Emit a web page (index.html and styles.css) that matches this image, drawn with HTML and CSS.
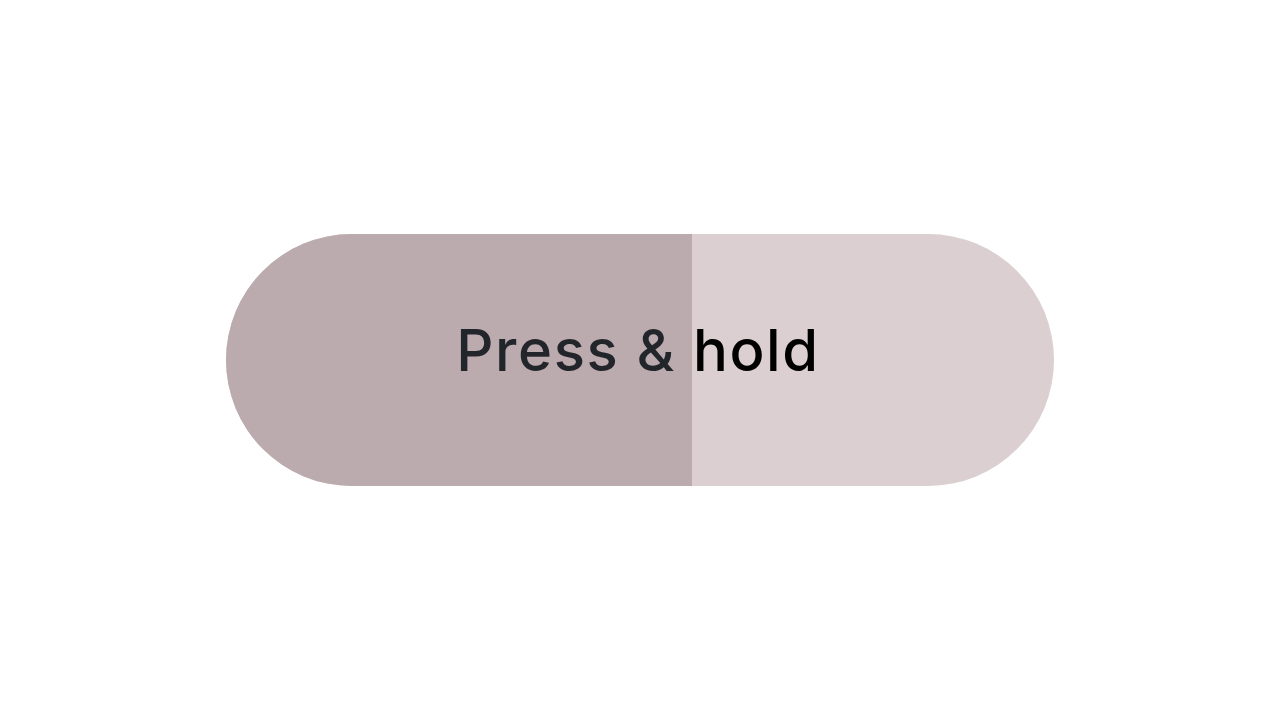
FILE: index.html
```html
<!DOCTYPE html>
<html>
<head>
<meta charset="utf-8">
<link rel="stylesheet" href="styles.css">
</head>
<body>
<main class="stage">
  <button class="hold-button">
    <span class="hold-fill" style="width:466px"></span>
    <span class="hold-label">Press &amp; hold</span>
  </button>
</main>
</body>
</html>
```
FILE: styles.css
```css
html, body {
  margin: 0;
  padding: 0;
  background: #ffffff;
}
.stage {
  width: 1280px;
  height: 720px;
  display: flex;
  align-items: flex-start;
  justify-content: center;
  padding-top: 234px;
  box-sizing: border-box;
}
.hold-button {
  position: relative;
  width: 828px;
  height: 252px;
  border: 0;
  padding: 0;
  margin: 0;
  border-radius: 126px;
  background: #dbcfd1;
  overflow: hidden;
  display: flex;
  align-items: center;
  justify-content: center;
  cursor: pointer;
}
.hold-fill {
  position: absolute;
  left: 0;
  top: 0;
  bottom: 0;
  background: #bbabae;
}
.hold-label {
  position: relative;
  display: block;
  width: 100%;
  box-sizing: border-box;
  padding-right: 4px;
  text-align: center;
  font-family: "Inter", "Noto Sans", sans-serif;
  font-size: 58px;
  font-weight: 500;
  letter-spacing: 1.6px;
  line-height: 1;
  margin-top: -20px;
  background: linear-gradient(to right, #22262a 0, #22262a 466px, #000000 466px, #000000 100%);
  -webkit-background-clip: text;
  background-clip: text;
  color: transparent;
}
```
